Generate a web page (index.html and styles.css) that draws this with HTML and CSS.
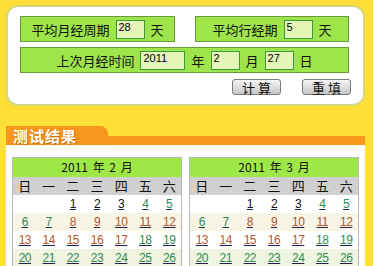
FILE: index.html
```html
<!DOCTYPE html>
<html>
<head>
<meta charset="utf-8">
<title>月经周期计算</title>
<link rel="stylesheet" href="styles.css">
</head>
<body>
<div class="page">
    <form class="calc">
        <div class="row">
            <div class="field field-cycle"><span>平均月经周期</span><input class="num" value="28"><span>天</span></div>
            <div class="field field-period"><span>平均行经期</span><input class="num" value="5"><span>天</span></div>
        </div>
        <div class="field field-last">
            <span>上次月经时间</span><input class="num year" value="2011"><span>年</span><input class="num" value="2"><span>月</span><input class="num" value="27"><span>日</span>
        </div>
        <div class="actions">
            <button type="button" class="btn">计 算</button>
            <button type="reset" class="btn">重 填</button>
        </div>
    </form>

    <div class="result">
        <div class="result-head">
            <div class="tab">测试结果</div>
            <div class="bar"></div>
        </div>
        <div class="result-body">
            <table class="cal">
                <tr class="cal-title"><th colspan="7">2011 年 2 月</th></tr>
                <tr class="week"><td>日</td><td>一</td><td>二</td><td>三</td><td>四</td><td>五</td><td>六</td></tr>
                <tr><td></td><td></td><td><a class="n">1</a></td><td><a class="n">2</a></td><td><a class="n">3</a></td><td><a class="g">4</a></td><td><a class="g">5</a></td></tr>
                <tr class="alt"><td><a class="g">6</a></td><td><a class="g">7</a></td><td><a class="r">8</a></td><td><a class="r">9</a></td><td><a class="r">10</a></td><td><a class="r">11</a></td><td><a class="r">12</a></td></tr>
                <tr><td><a class="r">13</a></td><td><a class="r">14</a></td><td><a class="r">15</a></td><td><a class="r">16</a></td><td><a class="r">17</a></td><td><a class="g">18</a></td><td><a class="g">19</a></td></tr>
                <tr class="alt2"><td><a class="g">20</a></td><td><a class="g">21</a></td><td><a class="g">22</a></td><td><a class="g">23</a></td><td><a class="g">24</a></td><td><a class="g">25</a></td><td><a class="g">26</a></td></tr>
            </table>
            <table class="cal">
                <tr class="cal-title"><th colspan="7">2011 年 3 月</th></tr>
                <tr class="week"><td>日</td><td>一</td><td>二</td><td>三</td><td>四</td><td>五</td><td>六</td></tr>
                <tr><td></td><td></td><td><a class="n">1</a></td><td><a class="n">2</a></td><td><a class="n">3</a></td><td><a class="g">4</a></td><td><a class="g">5</a></td></tr>
                <tr class="alt"><td><a class="g">6</a></td><td><a class="g">7</a></td><td><a class="r">8</a></td><td><a class="r">9</a></td><td><a class="r">10</a></td><td><a class="r">11</a></td><td><a class="r">12</a></td></tr>
                <tr><td><a class="r">13</a></td><td><a class="r">14</a></td><td><a class="r">15</a></td><td><a class="r">16</a></td><td><a class="r">17</a></td><td><a class="g">18</a></td><td><a class="g">19</a></td></tr>
                <tr class="alt2"><td><a class="g">20</a></td><td><a class="g">21</a></td><td><a class="g">22</a></td><td><a class="g">23</a></td><td><a class="g">24</a></td><td><a class="g">25</a></td><td><a class="g">26</a></td></tr>
            </table>
        </div>
    </div>
</div>
</body>
</html>
```

FILE: styles.css
```css
* {
    margin: 0;
    padding: 0;
    box-sizing: border-box;
}

html, body {
    overflow: hidden;
}

body {
    background: #ffdf38;
    font-family: "Noto Sans CJK SC", "Liberation Sans", sans-serif;
    font-size: 13px;
    color: #111;
}

.page {
    padding: 5px 0 0 6px;
    width: 365px;
}

/* 输入区 */
.calc {
    width: 359px;
    height: 101px;
    background: #fff;
    border: 2px solid #d3d87c;
    border-radius: 12px;
    padding: 9px 0 0 12px;
}

.row {
    display: flex;
    gap: 20px;
}

.field {
    display: flex;
    align-items: center;
    justify-content: center;
    gap: 6px;
    height: 26px;
    background: #9de54a;
    border: 1px solid #6a9a3a;
    line-height: 1;
}

.field-cycle {
    width: 155px;
}

.field-period {
    width: 154px;
}

.field-last {
    width: 329px;
    margin-top: 5px;
}

.num {
    width: 29px;
    height: 19px;
    border: 1px solid #3c9a3c;
    background: #e5f5b8;
    font-family: "Liberation Sans", sans-serif;
    font-size: 11px;
    padding: 0 2px 5px;
    color: #000;
    outline: none;
}

.num.year {
    width: 45px;
}

.actions {
    display: flex;
    justify-content: flex-end;
    gap: 21px;
    width: 331px;
    margin-top: 6px;
}

.btn {
    width: 49px;
    height: 16px;
    border: 1px solid #7c7c7c;
    border-radius: 3px;
    background: linear-gradient(#f6f6f6, #c6c6c6);
    font-family: "Noto Sans CJK SC", sans-serif;
    font-size: 13px;
    line-height: 13px;
    color: #111;
    cursor: pointer;
}

/* 结果 */
.result {
    margin-top: 20px;
    width: 359px;
}

.result-head {
    display: flex;
    align-items: flex-end;
    height: 19px;
}

.tab {
    width: 102px;
    height: 19px;
    background: #f7951e;
    border-radius: 0 8px 0 0;
    color: #fff;
    font-weight: bold;
    font-size: 15px;
    line-height: 19px;
    letter-spacing: 1px;
    padding-left: 7px;
    text-shadow: 1px 1px 0 #d06a00;
}

.bar {
    flex: 1;
    height: 9px;
    background: #f7981d;
}

.result-body {
    display: flex;
    gap: 7px;
    background: #fff;
    padding: 12px 0 0 6px;
    height: 121px;
}

.cal {
    width: 170px;
    height: 110px;
    border-collapse: collapse;
    border: 1px solid #b8b8b8;
    table-layout: fixed;
}

.cal th {
    height: 19px;
    line-height: 18px;
    background: #9de847;
    font-weight: normal;
    font-size: 12px;
    word-spacing: 2px;
}

.cal td {
    height: 18px;
    line-height: 16px;
    text-align: center;
    padding: 0;
}

.cal .week td {
    background: #d0d0d0;
    font-size: 13px;
}

.cal .alt td {
    background: #f8f5e6;
}

.cal .alt2 td {
    background: #eff5e0;
}

.cal a {
    font-family: "Liberation Sans", sans-serif;
    font-size: 12px;
    letter-spacing: -0.5px;
    text-decoration: underline;
    text-decoration-color: #22224a;
    cursor: pointer;
}

.cal a.n {
    color: #111;
}

.cal a.g {
    color: #2f8a56;
}

.cal a.r {
    color: #b6562e;
}
```
